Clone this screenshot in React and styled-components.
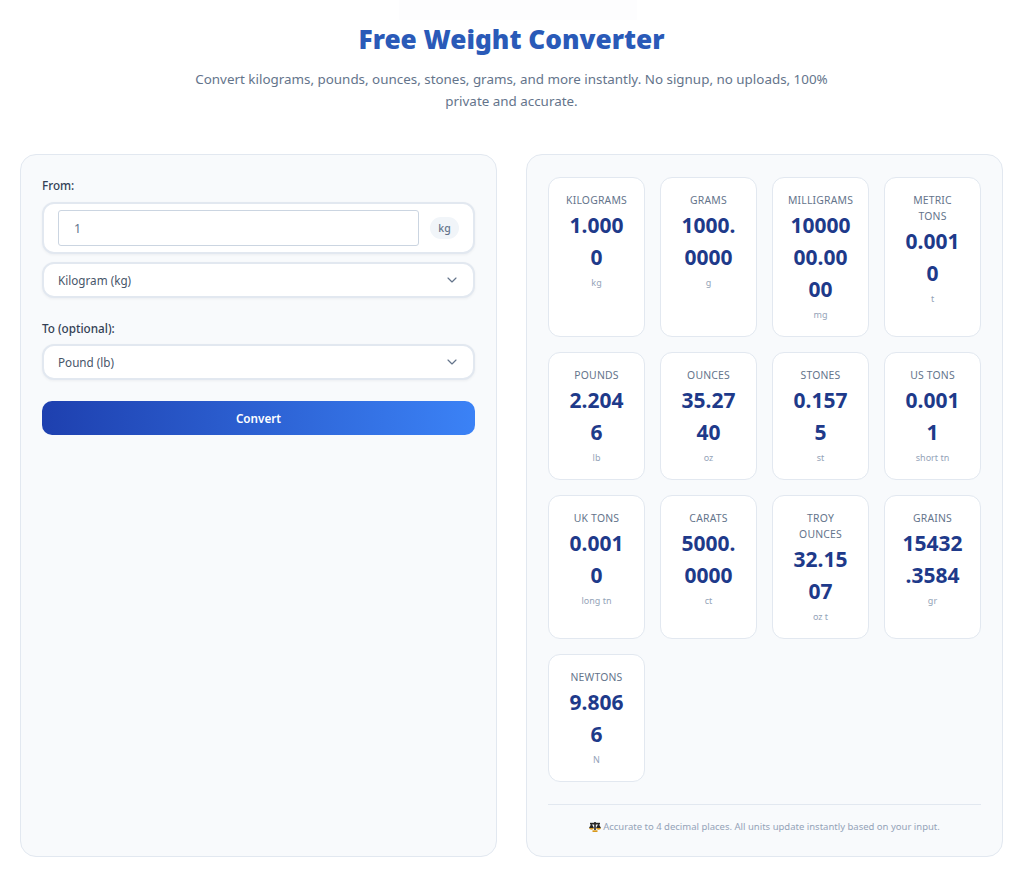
import styled, { createGlobalStyle } from 'styled-components'
import { ChevronDown } from 'lucide-react'

const units = [
  { name: 'Kilograms', value: '1.0000', unit: 'kg' },
  { name: 'Grams', value: '1000.0000', unit: 'g' },
  { name: 'Milligrams', value: '1000000.0000', unit: 'mg' },
  { name: 'Metric Tons', value: '0.0010', unit: 't' },
  { name: 'Pounds', value: '2.2046', unit: 'lb' },
  { name: 'Ounces', value: '35.2740', unit: 'oz' },
  { name: 'Stones', value: '0.1575', unit: 'st' },
  { name: 'US Tons', value: '0.0011', unit: 'short tn' },
  { name: 'UK Tons', value: '0.0010', unit: 'long tn' },
  { name: 'Carats', value: '5000.0000', unit: 'ct' },
  { name: 'Troy Ounces', value: '32.1507', unit: 'oz t' },
  { name: 'Grains', value: '15432.3584', unit: 'gr' },
  { name: 'Newtons', value: '9.8066', unit: 'N' },
]

function ScaleIcon() {
  return (
    <svg width="12" height="12" viewBox="0 0 12 12" aria-hidden="true">
      <path d="M5.2 1h1.6v8H5.2z" fill="#262626" />
      <path d="M1 1.8h10v1.7H1z" fill="#262626" />
      <path d="M2.5 2.5 0 7h5zM9.5 2.5 7 7h5z" fill="#262626" />
      <path d="M0 7h5c-.3 1.200-1.400 1.700-2.500 1.700S.3 8.200 0 7zM7 7h5c-.3 1.200-1.400 1.700-2.500 1.700S7.300 8.200 7 7z" fill="#d9991c" />
      <path d="M3.5 9.300h5V11h-5z" fill="#d9991c" />
    </svg>
  )
}

export default function App() {
  return (
    <Page>
      <GlobalStyle />
      <TopStrip />
      <Title>Free Weight Converter</Title>
      <Subtitle>
        Convert kilograms, pounds, ounces, stones, grams, and more instantly. No signup, no uploads, 100% private and accurate.
      </Subtitle>
      <Columns>
        <Panel>
          <Label>From:</Label>
          <InputGroup>
            <NumberInput type="text" defaultValue="1" />
            <UnitBadge>kg</UnitBadge>
          </InputGroup>
          <SelectWrap>
            <Select defaultValue="kg">
              <option value="kg">Kilogram (kg)</option>
              <option value="lb">Pound (lb)</option>
            </Select>
            <Chevron size={16} strokeWidth={1.75} />
          </SelectWrap>
          <Label second>To (optional):</Label>
          <SelectWrap>
            <Select defaultValue="lb">
              <option value="kg">Kilogram (kg)</option>
              <option value="lb">Pound (lb)</option>
            </Select>
            <Chevron size={16} strokeWidth={1.75} />
          </SelectWrap>
          <ConvertButton>Convert</ConvertButton>
        </Panel>
        <Panel>
          <Cards>
            {units.map((u) => (
              <Card key={u.name}>
                <CardName>{u.name}</CardName>
                <CardValue>{u.value}</CardValue>
                <CardUnit>{u.unit}</CardUnit>
              </Card>
            ))}
          </Cards>
          <Note>
            <ScaleIcon />
            Accurate to 4 decimal places. All units update instantly based on your input.
          </Note>
        </Panel>
      </Columns>
    </Page>
  )
}

const GlobalStyle = createGlobalStyle`
  * { box-sizing: border-box; }
  body {
    margin: 0;
    background: #ffffff;
    font-family: "Noto Sans", "Open Sans", sans-serif;
  }
`
const Page = styled.div`
  display: flex;
  flex-direction: column;
  align-items: center;
  padding: 0 21px 15px 20px;
`
const TopStrip = styled.div`
  width: 238px;
  height: 20px;
  margin-left: 13px;
  background: #fdfdfe;
`
const Title = styled.h1`
  margin: 0;
  height: 38px;
  font-size: 26.2px;
  line-height: 38px;
  font-weight: 900;
  color: #2a5ab8;
`
const Subtitle = styled.p`
  width: 640px;
  margin: 11px 0 0;
  font-size: 13.4px;
  line-height: 21.5px;
  text-align: center;
  color: #64748b;
`
const Columns = styled.div`
  width: 100%;
  margin-top: 42px;
  display: grid;
  grid-template-columns: 1fr 1fr;
  gap: 29px;
`
const Panel = styled.section`
  min-width: 0;
  padding: 22px 21px 21px;
  background: #f8fafc;
  border: 1px solid #e2e8f0;
  border-radius: 16px;
`
const Label = styled.div`
  margin: ${(props) => (props.second ? '22px' : '0')} 0 ${(props) => (props.second ? '8px' : '9px')};
  font-size: 11.7px;
  line-height: 16px;
  font-weight: 500;
  color: #334155;
`
const InputGroup = styled.div`
  height: 52px;
  display: flex;
  align-items: center;
  gap: 11px;
  padding: 0 14px;
  background: #ffffff;
  border: 2px solid #e2e8f0;
  border-radius: 12px;
  box-shadow: 0 1px 3px rgba(15, 23, 42, 0.05);
`
const NumberInput = styled.input`
  flex: 1;
  min-width: 0;
  height: 36px;
  padding: 0 15px;
  background: #ffffff;
  border: 1px solid #cbd5e1;
  border-radius: 3px;
  outline: none;
  font-family: inherit;
  font-size: 12.5px;
  color: #64748b;
`
const UnitBadge = styled.span`
  width: 29px;
  height: 22px;
  display: flex;
  align-items: center;
  justify-content: center;
  background: #f1f5f9;
  border-radius: 11px;
  font-size: 10.5px;
  font-weight: 500;
  color: #64748b;
`
const SelectWrap = styled.div`
  position: relative;
  margin-top: 8px;
  ${Label} + & { margin-top: 0; }
`
const Select = styled.select`
  display: block;
  width: 100%;
  height: 36px;
  padding: 0 14px;
  appearance: none;
  background: #ffffff;
  border: 2px solid #e2e8f0;
  border-radius: 12px;
  box-shadow: 0 1px 3px rgba(15, 23, 42, 0.05);
  outline: none;
  font-family: inherit;
  font-size: 11.7px;
  color: #475569;
`
const Chevron = styled(ChevronDown)`
  position: absolute;
  top: 10px;
  right: 15px;
  color: #64748b;
  pointer-events: none;
`
const ConvertButton = styled.button`
  display: block;
  width: 100%;
  height: 34px;
  margin-top: 21px;
  padding-bottom: 2px;
  border: none;
  border-radius: 10px;
  background: linear-gradient(90deg, #1e40af, #3b82f6);
  font-family: inherit;
  font-size: 11.7px;
  font-weight: 600;
  color: #ffffff;
`
const Cards = styled.div`
  display: grid;
  grid-template-columns: repeat(4, minmax(0, 1fr));
  gap: 15px;
`
const Card = styled.div`
  padding: 14px 14px 13px;
  background: #ffffff;
  border: 1px solid #e2e8f0;
  border-radius: 12px;
  text-align: center;
`
const CardName = styled.div`
  font-size: 10.4px;
  line-height: 16px;
  text-transform: uppercase;
  letter-spacing: 0.2px;
  color: #64748b;
`
const CardValue = styled.div`
  margin: 1px 2px 0;
  font-size: 21px;
  line-height: 32px;
  font-weight: 700;
  color: #1e3a8a;
  overflow-wrap: anywhere;
`
const CardUnit = styled.div`
  margin-top: 2px;
  font-size: 9px;
  line-height: 16px;
  color: #94a3b8;
`
const Note = styled.div`
  margin-top: 22px;
  padding-top: 14px;
  border-top: 1px solid #e2e8f0;
  display: flex;
  align-items: center;
  justify-content: center;
  gap: 2px;
  font-size: 9.5px;
  line-height: 16px;
  color: #94a3b8;
`
